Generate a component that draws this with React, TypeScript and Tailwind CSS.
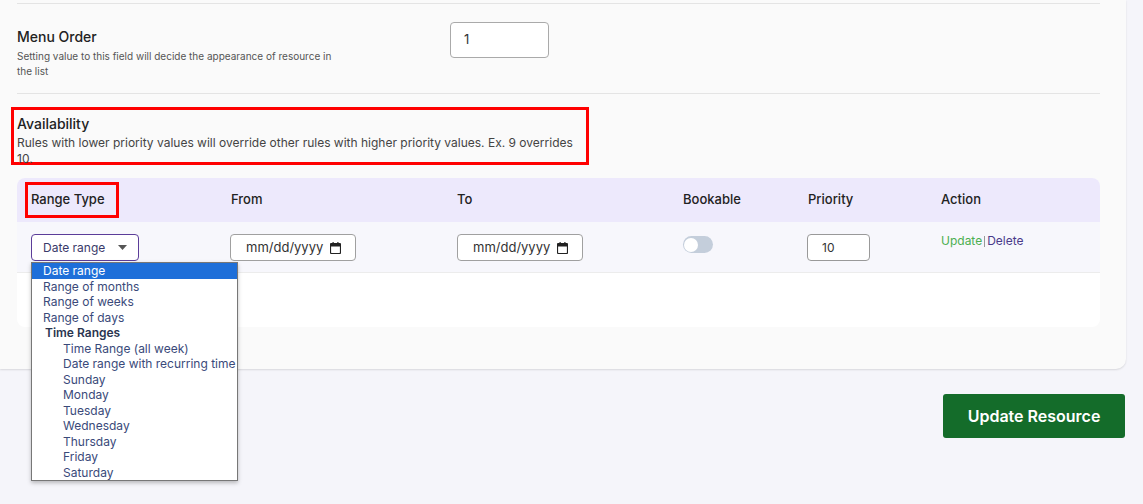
import React from "react";

const opts1 = ["Range of months", "Range of weeks", "Range of days"];
const opts2 = ["Time Range (all week)", "Date range with recurring time", "Sunday", "Monday", "Tuesday", "Wednesday", "Thursday", "Friday", "Saturday"];

function DateInput() {
  return (
    <div className="w-[126px] h-[27px] border border-[#a0a0a0] rounded-[4px] bg-white flex items-center justify-between pl-[15px] pr-[14px] text-[13px] text-[#333]">
      <span>mm/dd/yyyy</span>
      <svg width="11" height="12" viewBox="0 0 11 12"><rect x="0.5" y="1.5" width="10" height="10" rx="1" fill="none" stroke="#222" strokeWidth="1.2"/><rect x="0.5" y="1.5" width="10" height="3" fill="#222"/><rect x="2.5" y="0" width="1.2" height="2" fill="#222"/><rect x="7.3" y="0" width="1.2" height="2" fill="#222"/></svg>
    </div>
  );
}

export default function App() {
  return (
    <div className="w-[1143px] h-[504px] bg-[#f5f5fa] overflow-hidden relative" style={{ fontFamily: "Inter, 'Noto Sans', sans-serif" }}>
      <div className="w-[1126px] bg-[#fafafa] rounded-br-[10px] shadow-[0_1px_2px_rgba(0,0,0,0.12)] pl-[17px] pr-[26px] pt-[3px] pb-[42px]">
        <div className="border-t border-[#e4e4e4] h-[90px] flex">
          <div className="w-[433px] pt-[24px]">
            <div className="text-[14px] text-[#222] font-medium leading-[18px]">Menu Order</div>
            <div className="text-[10px] text-[#555] leading-[15px] mt-[3px] w-[320px]">Setting value to this field will decide the appearance of resource in the list</div>
          </div>
          <div className="pt-[18px]">
            <div className="w-[99px] h-[36px] border border-[#aaa] rounded-[4px] bg-white flex items-center pl-[13px] text-[13px] text-[#333]">1</div>
          </div>
        </div>
        <div className="border-t border-[#e4e4e4] pt-[13px]">
          <div className="ml-[-6px] w-[578px] h-[58px] border-[3px] border-[#ff0000] pl-[3px] pt-[5px]">
            <div className="text-[14px] font-medium text-[#222] leading-[18px]">Availability</div>
            <div className="text-[12px] text-[#444] leading-[16px] mt-[2px]">Rules with lower priority values will override other rules with higher priority values. Ex. 9 overrides 10.</div>
          </div>
          <div className="mt-[13px] rounded-[8px] bg-white overflow-hidden">
            <div className="h-[44px] bg-[#ede9fc] flex items-center text-[13px] font-medium text-[#222]">
              <div className="w-[214px] pl-[8px]"><div className="w-[94px] h-[36px] border-[3px] border-[#ff0000] flex items-center pl-[3px]">Range Type</div></div>
              <div className="w-[226px]">From</div>
              <div className="w-[226px]">To</div>
              <div className="w-[125px]">Bookable</div>
              <div className="w-[133px]">Priority</div>
              <div>Action</div>
            </div>
            <div className="h-[51px] bg-[#f7f7fc] border-b border-[#ececec] flex items-start pt-[12px] text-[13px]">
              <div className="w-[213px] pl-[14px]">
                <div className="w-[108px] h-[27px] border border-[#5b3d99] rounded-[4px] bg-white flex items-center justify-between pl-[11px] pr-[11px] text-[12px] text-[#3a3a6a]">
                  <span>Date range</span>
                  <svg width="9" height="5" viewBox="0 0 9 5"><path d="M0 0h9L4.5 5z" fill="#555"/></svg>
                </div>
              </div>
              <div className="w-[227px]"><DateInput /></div>
              <div className="w-[226px]"><DateInput /></div>
              <div className="w-[124px] pt-[2px]">
                <div className="w-[30px] h-[17px] rounded-full bg-[#c4cedb] flex items-center pl-[1px]"><div className="w-[14px] h-[14px] rounded-full bg-white"/></div>
              </div>
              <div className="w-[134px]">
                <div className="w-[63px] h-[27px] border border-[#999] rounded-[4px] bg-white flex items-center pl-[14px] text-[12px] text-[#333]">10</div>
              </div>
              <div className="flex items-center text-[12px] -mt-[2px]">
                <span className="text-[#4caf50]">Update</span>
                <span className="w-px h-[11px] bg-[#999] mx-[2px]"/>
                <span className="text-[#4a3a8a]">Delete</span>
              </div>
            </div>
            <div className="h-[54px]" />
          </div>
        </div>
      </div>
      <div className="flex justify-end pr-[18px] mt-[25px]">
        <div className="w-[182px] h-[44px] bg-[#146c2a] rounded-[3px] text-white text-[16px] font-semibold flex items-center justify-center">Update Resource</div>
      </div>

      <div className="absolute left-[31px] top-[262px] w-[207px] border border-[#777] bg-white shadow-[0_2px_4px_rgba(0,0,0,0.25)] text-[12px] leading-[15.5px] text-[#3a4a7a]">
        <div className="bg-[#1e6fd9] text-white pl-[11px]">Date range</div>
        {opts1.map(o => <div key={o} className="pl-[11px]">{o}</div>)}
        <div className="pl-[13px] font-semibold text-[#2a3550]">Time Ranges</div>
        {opts2.map(o => <div key={o} className="pl-[31px] whitespace-nowrap">{o}</div>)}
      </div>
    </div>
  );
}
